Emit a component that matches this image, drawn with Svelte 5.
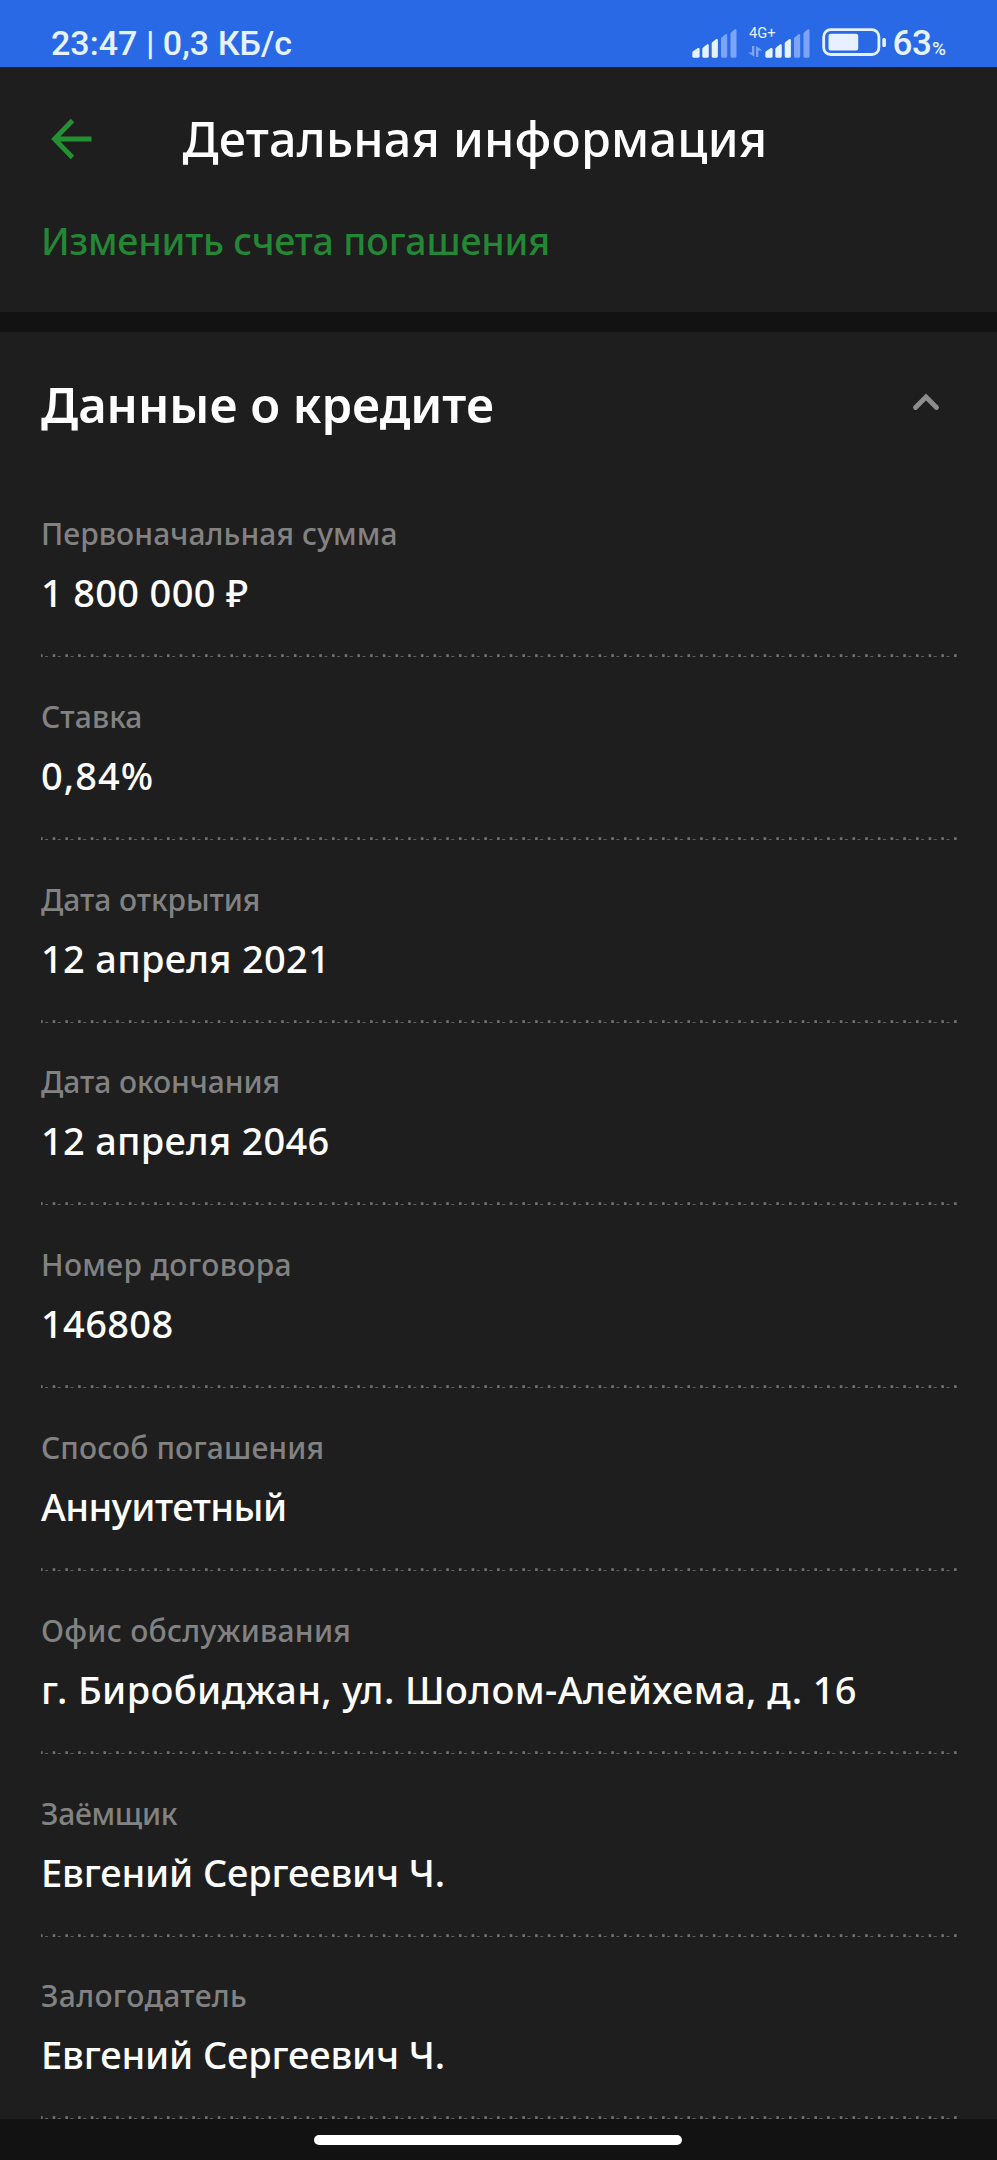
<script>
  const rows = [
    { label: 'Первоначальная сумма', ls: 0.09, value: '1 800 000 ₽', vs: 0.32 },
    { label: 'Ставка', ls: 0.1, value: '0,84%', vs: 1.05 },
    { label: 'Дата открытия', ls: -0.05, value: '12 апреля 2021', vs: 0.3 },
    { label: 'Дата окончания', ls: -0.05, value: '12 апреля 2046', vs: 0.26 },
    { label: 'Номер договора', ls: 0.36, value: '146808', vs: 0.34 },
    { label: 'Способ погашения', ls: 0.11, value: 'Аннуитетный', vs: -0.52 },
    { label: 'Офис обслуживания', ls: 0.29, value: 'г. Биробиджан, ул. Шолом-Алейхема, д. 16', vs: 0.39 },
    { label: 'Заёмщик', ls: -0.28, value: 'Евгений Сергеевич Ч.', vs: -0.14 },
    { label: 'Залогодатель', ls: 0.33, value: 'Евгений Сергеевич Ч.', vs: -0.14 }
  ];
  const dots = Array.from({ length: 73 }, (_, i) => i * 12.695);
</script>

{#snippet bars()}
  <path class="on" d="M0 22.2c0-.7.4-1.4 1-1.8l4.2-2.7c1-.6 2.1 0 2.1 1.1v7q0 1.400-1.400 1.400H1.400q-1.400 0-1.400-1.400z" />
  <path class="on" d="M10 18.600q0-1 .8-1.600l3.800-3c.9-.6 1.900-.1 1.900 1v10.800q0 1.400-1.400 1.400h-3.700q-1.400 0-1.400-1.400z" />
  <path class="on" d="M19.400 13.200q0-1 .8-1.600l3.500-2.900c.9-.7 1.900-.2 1.900.9v16.200q0 1.400-1.400 1.400h-3.400q-1.400 0-1.400-1.400z" />
  <path class="off" d="M28.700 8.300q0-1 .8-1.600l3.500-2.800c.9-.7 1.900-.2 1.900.9v21q0 1.400-1.400 1.400h-3.400q-1.400 0-1.400-1.400z" />
  <path class="off" d="M38.200 3.300q0-1 .8-1.600L42.300-.9c.9-.7 1.900-.2 1.900.9v25.800q0 1.400-1.400 1.400h-3.200q-1.400 0-1.400-1.400z" />
{/snippet}

<div class="screen">
  <div class="status">
    <span class="clock">23:47 | 0,3 КБ/с</span>
    <div class="indicators">
      <svg class="signal" width="46" height="30" viewBox="-.3 -1.500 46 30">{@render bars()}</svg>
      <div class="mobile">
        <span class="net">4G+</span>
        <svg class="arrows" width="16" height="12" viewBox="0 0 16 12">
          <path d="M4 0h2.300v10.700L0 6.400h4z" />
          <path d="M10.300 11H8V0l6.500 4.600h-4.200z" />
        </svg>
        <svg class="signal" width="46" height="30" viewBox="-.3 -1.500 46 30">{@render bars()}</svg>
      </div>
      <svg class="battery" width="66" height="30" viewBox="0 0 66 30">
        <rect x="2.700" y="2.700" width="55.200" height="24.800" rx="7" fill="none" stroke="#e6f1ff" stroke-width="2.800" />
        <rect x="7.500" y="6.800" width="29.700" height="16.700" rx="2" fill="#e8efff" />
        <rect x="61.300" y="11" width="3.600" height="9" rx="1.500" fill="#e6f1ff" />
      </svg>
      <span class="charge">63<small>%</small></span>
    </div>
  </div>

  <header>
    <svg width="42" height="42" viewBox="0 0 42 42" fill="none" stroke="#249034" stroke-width="4.800">
      <path d="M22.500 2.500 4.500 21l18 18.500M4 21h37.500" />
    </svg>
    <h1>Детальная информация</h1>
  </header>
  <div class="link">Изменить счета погашения</div>
  <div class="band"></div>

  <section>
    <div class="head">
      <h2>Данные о кредите</h2>
      <svg width="28" height="20" viewBox="0 0 28 20" fill="none" stroke="#8d8d8d" stroke-width="4.800" stroke-linecap="round">
        <path d="M3.500 15.500 14 5l10.500 10.500" />
      </svg>
    </div>
    {#each rows as row}
      <div class="row">
        <div class="label" style="letter-spacing:{row.ls}px">{row.label}</div>
        <div class="value" style="letter-spacing:{row.vs}px">{row.value}</div>
        <svg class="rule" width="918" height="4" viewBox="0 0 918 4">
          {#each dots as x, i}
            <rect x={x - 1} y=".2" width="2.600" height="2.800" fill="#707070" />
            {#if i < 72}<rect x={x + 4.100} y="2" width="3" height="1" fill="#5f5f5f" />{/if}
          {/each}
        </svg>
      </div>
    {/each}
  </section>
  <nav><div class="pill"></div></nav>
</div>

<style>
  :global(body) { background: #1e1e1e; }
  .screen {
    width: 997px;
    height: 2160px;
    overflow: hidden;
    display: flex;
    flex-direction: column;
    background: #1e1e1e;
    color: #fff;
    font-family: "Noto Sans", sans-serif;
  }
  .status {
    box-sizing: border-box;
    flex: none;
    height: 68px;
    display: flex;
    justify-content: space-between;
    padding: 0 51px;
    background: #2969e5;
    border-bottom: 1px solid #14233f;
    color: #e6f3ff;
    font-family: Roboto, sans-serif;
  }
  .clock {
    padding-top: 23px;
    font-size: 34px;
    line-height: 40px;
    letter-spacing: 0.03px;
    font-weight: 480;
    white-space: pre;
  }
  .indicators { display: flex; height: 67px; }
  .signal { display: block; margin-top: 28.5px; overflow: visible; }
  .on { fill: #e6f3ff; }
  .off { fill: #7da4fa; }
  .mobile { position: relative; display: flex; margin-left: 10px; }
  .arrows { margin-top: 46px; margin-right: 1px; fill: #7da4fa; }
  .net {
    position: absolute;
    left: 1px;
    top: 25px;
    font-size: 14.7px;
    line-height: 17px;
  }
  .battery { margin: 26.5px 0 0 10px; }
  .charge {
    margin-left: 5.5px;
    width: 53.5px;
    padding-top: 24px;
    font-size: 35px;
    font-weight: 500;
    line-height: 40px;
    letter-spacing: -0.4px;
    white-space: nowrap;
  }
  .charge small { font-size: 19px; margin-left: 0.5px; }
  header {
    flex: none;
    height: 147px;
    display: flex;
    align-items: flex-start;
    padding-left: 50px;
  }
  header svg { margin-top: 49.5px; }
  h1 {
    margin: 40px 0 0 90.5px;
    font-size: 48.5px;
    line-height: 60px;
    font-weight: 500;
    letter-spacing: 0.2px;
  }
  .link {
    flex: none;
    height: 97px;
    padding-left: 41px;
    font-size: 37.5px;
    font-weight: 500;
    line-height: 51px;
    letter-spacing: -0.18px;
    color: #238735;
  }
  .band { flex: none; height: 20px; background: #121212; }
  section {
    flex: none;
    box-sizing: border-box;
    height: 1787px;
    padding: 42px 39px 0 41px;
    position: relative;
    z-index: 1;
  }
  .head {
    display: flex;
    justify-content: space-between;
    height: 140.1px;
  }
  .head svg { margin: 18px 18px 0 0; }
  h2 {
    margin: 0;
    font-size: 49px;
    line-height: 60px;
    font-weight: 600;
  }
  .row {
    display: flex;
    flex-direction: column;
    height: 182.8px;
  }
  .label {
    font-size: 30px;
    font-weight: 500;
    line-height: 40px;
    color: #828282;
  }
  .value {
    margin-top: 12px;
    font-size: 38px;
    font-weight: 500;
    line-height: 52px;
    white-space: pre;
  }
  .rule { display: block; margin-top: 36px; flex: none; }
  nav {
    flex: none;
    height: 41px;
    display: flex;
    justify-content: center;
    background: #121212;
  }
  .pill {
    width: 368px;
    height: 9.5px;
    margin: 16px 1px 0 0;
    border-radius: 5px;
    background: #fff;
  }
</style>
